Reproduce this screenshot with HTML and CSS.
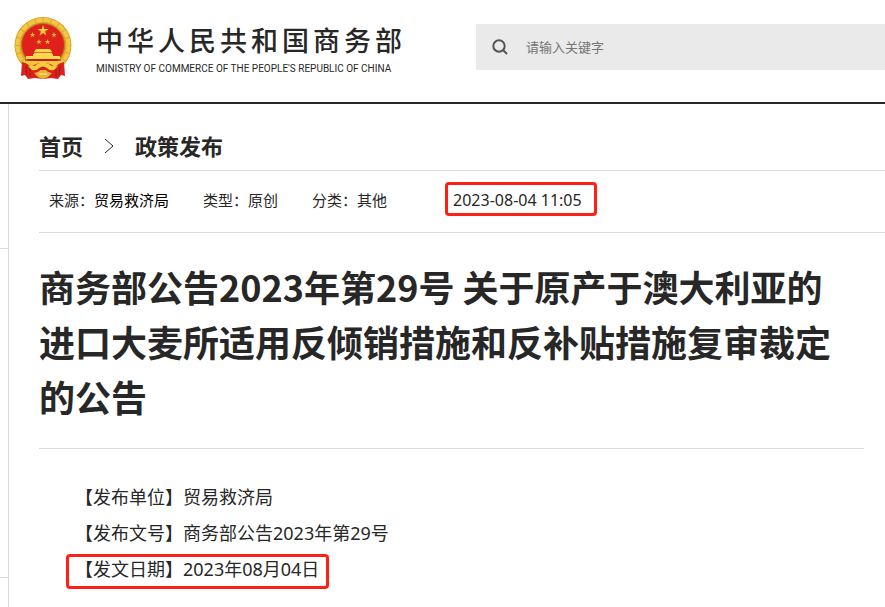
FILE: index.html
```html
<!DOCTYPE html>
<html lang="zh-CN">
<head>
<meta charset="utf-8">
<meta name="viewport" content="width=device-width, initial-scale=1">
<title>中华人民共和国商务部</title>
<link rel="stylesheet" href="styles.css">
</head>
<body>
<header class="site-header">
  <a class="brand" href="#">
    <svg class="emblem" viewBox="0 0 58 63" aria-hidden="true">
      <circle cx="29" cy="28.500" r="28.500" fill="#dda52b"/>
      <circle cx="29" cy="28.500" r="25.500" fill="none" stroke="#f1c744" stroke-width="4" stroke-dasharray="7 1"/>
      <circle cx="29" cy="28" r="21.500" fill="#e0201b" stroke="#b87a1c"/>
      <path d="M29 8l1.300 4h4.300l-3.500 2.500 1.400 4.100-3.500-2.600-3.500 2.600 1.400-4.100-3.500-2.500h4.300z" fill="#f6cf3c"/>
      <g fill="#f0bd35">
        <path id="star" d="M18.500 15l.7 2h2l-1.600 1.200.6 2.100-1.700-1.300-1.700 1.300.6-2.100-1.600-1.200h2z"/>
        <use href="#star" x="21.500"/>
        <use href="#star" x="6.500" y="7"/>
        <use href="#star" x="15" y="7"/>
      </g>
      <path d="M20 35l2-3h14l2 3v2h1v2h7v3H12v-3h7v-2h1z" fill="#f8d84f"/>
      <path d="M20 35.500h18" stroke="#d96a24"/>
      <path d="M11 44h36l-4 6H15z" fill="#f3c83d"/>
      <path d="M11 43h36" stroke="#b81c17"/>
      <path d="M8 45q6 1 9 6q3-5 12-5t12 5q3-5 9-6l1 14-4-1-3 4-7-1-8 1-8-1-7 1-3-4-4 1z" fill="#d9221c"/>
      <path d="M12 49l1 9M16 52v8M46 49l-1 9M42 52v8" stroke="#a31814"/>
      <path d="M14 49q7 1 9-2q6-3 12 0q2 3 9 2l-4 4q-5 1-7-2q-4-3-8 0q-2 3-7 2z" fill="#f5cd43"/>
      <path d="M20 56q5-1 6-3h6q1 2 6 3l-4 4-5 2-5-2z" fill="#e8b532"/>
      <path d="M25 57h8" stroke="#fff0a0"/>
    </svg>
    <span class="brand-text">
      <span class="brand-name">中华人民共和国商务部</span>
      <span class="brand-sub">MINISTRY OF COMMERCE OF THE PEOPLE'S REPUBLIC OF CHINA</span>
    </span>
  </a>
  <form class="search" role="search">
    <button class="search-button" type="button" aria-label="搜索">
      <svg viewBox="0 0 16 16" aria-hidden="true"><circle cx="7" cy="7" r="5.700"/><path d="M11 11l4 4"/></svg>
    </button>
    <input class="search-input" type="text" aria-label="关键字" placeholder="请输入关键字">
  </form>
</header>
<div class="page">
  <div class="rail" aria-hidden="true">
    <div class="rail-first"></div>
    <div class="rail-second"></div>
  </div>
  <main class="article">
    <nav class="breadcrumb" aria-label="当前位置">
      <a href="#">首页</a>
      <svg viewBox="0 0 10 16" aria-hidden="true"><path d="M1 1l8 7-8 7"/></svg>
      <a href="#">政策发布</a>
    </nav>
    <div class="meta">
      <span>来源：<b class="source">贸易救济局</b></span>
      <span>类型：原创</span>
      <span>分类：其他</span>
      <time class="date marked" datetime="2023-08-04T11:05">2023-08-04 11:05</time>
    </div>
    <h1 class="title">商务部公告2023年第29号 关于原产于澳大利亚的进口大麦所适用反倾销措施和反补贴措施复审裁定的公告</h1>
    <div class="details">
      <p>【发布单位】贸易救济局</p>
      <p>【发布文号】商务部公告2023年第29号</p>
      <p class="marked">【发文日期】2023年08月04日</p>
    </div>
  </main>
</div>
</body>
</html>
```

FILE: styles.css
```css
* {
  box-sizing: border-box;
}

body {
  margin: 0;
  background: #fff;
  color: #272727;
  font-family: "Noto Sans", "Noto Sans CJK SC", sans-serif;
}

a {
  color: inherit;
  text-decoration: none;
}

.site-header {
  display: flex;
  align-items: flex-start;
  gap: 72px;
  height: 104px;
  padding-left: 14px;
  border-bottom: 2px solid #272727;
}

.brand {
  display: flex;
  flex: none;
  gap: 24px;
  padding-top: 17px;
}

.emblem {
  width: 58px;
  height: 63px;
}

.brand-text {
  display: flex;
  flex-direction: column;
  gap: 2px;
  width: 308px;
  padding-top: 3px;
  white-space: nowrap;
}

.brand-name {
  font-family: "Noto Sans CJK SC", sans-serif;
  font-size: 27px;
  font-weight: 500;
  line-height: 40px;
  letter-spacing: 4px;
}

.brand-sub {
  font-family: Roboto, "Liberation Sans", sans-serif;
  font-size: 10px;
  line-height: 14px;
}

.search {
  display: flex;
  flex: 1;
  align-items: center;
  gap: 18px;
  height: 46px;
  margin-top: 24px;
  padding-left: 16px;
  background: #eaeaea;
}

.search-button {
  display: flex;
  padding: 0;
  border: 0;
  background: none;
}

.search-button svg {
  width: 16px;
  height: 16px;
  fill: none;
  stroke: #555;
  stroke-width: 2;
}

.search-input {
  flex: 1;
  min-width: 0;
  padding: 0;
  border: 0;
  outline: 0;
  background: none;
  font-family: "Noto Sans", "Noto Sans CJK SC", sans-serif;
  font-size: 13px;
}

.search-input::placeholder {
  color: #757575;
}

.page {
  display: flex;
}

.rail {
  width: 9px;
  border-right: 1px solid #d9d9d9;
}

.rail-first {
  height: 145px;
  border-bottom: 1px solid #d9d9d9;
}

.rail-second {
  height: 329px;
  border-bottom: 1px solid #d9d9d9;
}

.article {
  flex: 1;
  padding-left: 30px;
  padding-bottom: 20px;
}

.breadcrumb {
  display: flex;
  align-items: center;
  gap: 21px;
  padding: 26px 0 8px;
  border-bottom: 1px solid #d9d9d9;
  font-size: 22px;
  font-weight: 700;
  line-height: 32px;
}

.breadcrumb svg {
  width: 10px;
  height: 16px;
  fill: none;
  stroke: #272727;
}

.meta {
  display: flex;
  align-items: center;
  gap: 34px;
  padding: 17px 0 20px 10px;
  border-bottom: 1px solid #d9d9d9;
  font-size: 15px;
  line-height: 24px;
}

.source {
  color: #000;
  font-weight: 400;
}

.date {
  margin-left: 32px;
  font-size: 16px;
}

.title {
  margin: 0 21px 0 0;
  padding: 26px 30px 24px 0;
  border-bottom: 1px solid #d9d9d9;
  font-family: "Noto Sans CJK SC", sans-serif;
  font-size: 36px;
  font-weight: 700;
  line-height: 55px;
}

.details {
  padding: 30px 36px 0;
  font-size: 18px;
  line-height: 36px;
}

.details p {
  width: fit-content;
  margin: 0;
}

.marked {
  position: relative;
}

.marked::after {
  content: "";
  position: absolute;
  inset: 3px -10px -2px -9px;
  border: 3px solid #ff2015;
  border-radius: 4px;
}

.date.marked::after {
  inset: -6px -15px -4px -8px;
}
```
